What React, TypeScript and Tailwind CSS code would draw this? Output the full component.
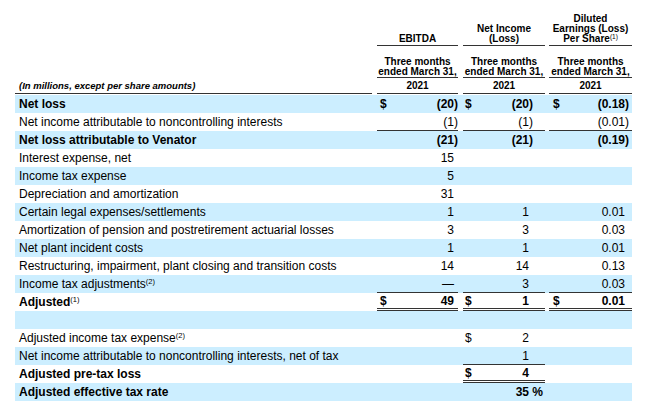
type Cell = { v: string; d?: boolean };
type Row = {
  label?: string;
  sup?: string;
  bold?: boolean;
  cells: (Cell | null)[];
  lines?: ("s" | "d" | null)[];
};

const rows: Row[] = [
  { label: "Net loss", bold: true, cells: [{ v: "(20)", d: true }, { v: "(20)", d: true }, { v: "(0.18)", d: true }] },
  { label: "Net income attributable to noncontrolling interests", cells: [{ v: "(1)" }, { v: "(1)" }, { v: "(0.01)" }], lines: ["s", "s", "s"] },
  { label: "Net loss attributable to Venator", bold: true, cells: [{ v: "(21)" }, { v: "(21)" }, { v: "(0.19)" }] },
  { label: "Interest expense, net", cells: [{ v: "15" }, null, null] },
  { label: "Income tax expense", cells: [{ v: "5" }, null, null] },
  { label: "Depreciation and amortization", cells: [{ v: "31" }, null, null] },
  { label: "Certain legal expenses/settlements", cells: [{ v: "1" }, { v: "1" }, { v: "0.01" }] },
  { label: "Amortization of pension and postretirement actuarial losses", cells: [{ v: "3" }, { v: "3" }, { v: "0.03" }] },
  { label: "Net plant incident costs", cells: [{ v: "1" }, { v: "1" }, { v: "0.01" }] },
  { label: "Restructuring, impairment, plant closing and transition costs", cells: [{ v: "14" }, { v: "14" }, { v: "0.13" }] },
  { label: "Income tax adjustments", sup: "(2)", cells: [{ v: "—" }, { v: "3" }, { v: "0.03" }], lines: ["s", "s", "s"] },
  { label: "Adjusted", sup: "(1)", bold: true, cells: [{ v: "49", d: true }, { v: "1", d: true }, { v: "0.01", d: true }], lines: ["d", "d", "d"] },
  { cells: [null, null, null] },
  { label: "Adjusted income tax expense", sup: "(2)", cells: [null, { v: "2", d: true }, null] },
  { label: "Net income attributable to noncontrolling interests, net of tax", cells: [null, { v: "1" }, null], lines: [null, "s", null] },
  { label: "Adjusted pre-tax loss", bold: true, cells: [null, { v: "4", d: true }, null], lines: [null, "d", null] },
  { label: "Adjusted effective tax rate", bold: true, cells: [null, { v: "35 %" }, null] },
];

const cols = [
  { w: "w-[81px]", pl: "pl-[3px]", paren: "pr-0", num: "pr-[4px]", pct: "pr-0" },
  { w: "w-[82px]", pl: "pl-[2px]", paren: "pr-[12px]", num: "pr-[16px]", pct: "pr-[2px]" },
  { w: "w-[83px]", pl: "pl-[4px]", paren: "pr-[3px]", num: "pr-[7px]", pct: "pr-0" },
];
const gaps = ["w-[5px]", "w-[5px]", "w-[4px]"];

function Sup({ t }: { t: string }) {
  return <sup className="relative -top-[2px] text-[7.5px] font-normal">{t}</sup>;
}

function ValueCell({ c, i, bold, line }: { c: Cell | null; i: number; bold?: boolean; line?: "s" | "d" | null }) {
  const col = cols[i];
  const pr = !c ? "" : c.v.endsWith(")") ? col.paren : c.v.endsWith("%") ? col.pct : col.num;
  const border =
    line === "s" ? "border-b border-[#333]" : line === "d" ? "border-b-[3px] border-double border-[#333]" : "";
  return (
    <div className={`${col.w} ${col.pl} ${pr} ${border} box-border flex h-full items-center justify-between ${bold ? "font-bold" : ""}`}>
      <span>{c?.d ? "$" : ""}</span>
      <span>{c?.v}</span>
    </div>
  );
}

function HeaderRow({ h, label, texts, align }: { h: string; label?: React.ReactNode; texts: React.ReactNode[]; align: string }) {
  return (
    <div className={`flex ${h}`}>
      <div className={`w-[357px] ${label ? "border-b border-[#333]" : ""} flex items-end pb-[2px] pl-[4px] text-[9.5px]`}>{label}</div>
      {texts.map((t, i) => (
        <div key={i} className="flex">
          <div className={gaps[i]} />
          <div className={`${cols[i].w} border-b border-[#333] flex flex-col items-center justify-end text-center ${align}`}>
            {t}
          </div>
        </div>
      ))}
    </div>
  );
}

export default function App() {
  return (
    <div className="h-[415px] w-[656px] bg-white pl-[15px] font-['Liberation_Sans',Arial,sans-serif] text-black">
      <div className="w-[617px] text-[10px] font-bold leading-[10px]">
        <HeaderRow
          h="h-[46px]"
          align="pb-[1px]"
          texts={[
            <span>EBITDA</span>,
            <>
              <span>Net Income</span>
              <span>(Loss)</span>
            </>,
            <>
              <span>Diluted</span>
              <span>Earnings (Loss)</span>
              <span>
                Per Share<sup className="text-[6.5px] font-normal">(1)</sup>
              </span>
            </>,
          ]}
        />
        <HeaderRow
          h="h-[32px]"
          align="pb-0"
          texts={[0, 1, 2].map(() => (
            <>
              <span>Three months</span>
              <span>ended March 31,</span>
            </>
          ))}
        />
        <HeaderRow
          h="h-[16px]"
          align="pb-[2px]"
          label={<i>(In millions, except per share amounts)</i>}
          texts={[0, 1, 2].map(() => <span>2021</span>)}
        />
      </div>
      <div className="mt-[1px] w-[617px] text-[12px] leading-[14px]">
        {rows.map((r, ri) => (
          <div key={ri} className={`flex h-[18px] ${ri % 2 === 0 ? "bg-[#cceeff]" : ""}`}>
            <div className={`flex w-[357px] items-center pl-[4px] ${r.bold ? "font-bold" : ""}`}>
              {r.label}
              {r.sup && <Sup t={r.sup} />}
            </div>
            {r.cells.map((c, i) => (
              <div key={i} className="flex">
                <div className={gaps[i]} />
                <ValueCell c={c} i={i} bold={r.bold} line={r.lines?.[i]} />
              </div>
            ))}
          </div>
        ))}
      </div>
    </div>
  );
}
